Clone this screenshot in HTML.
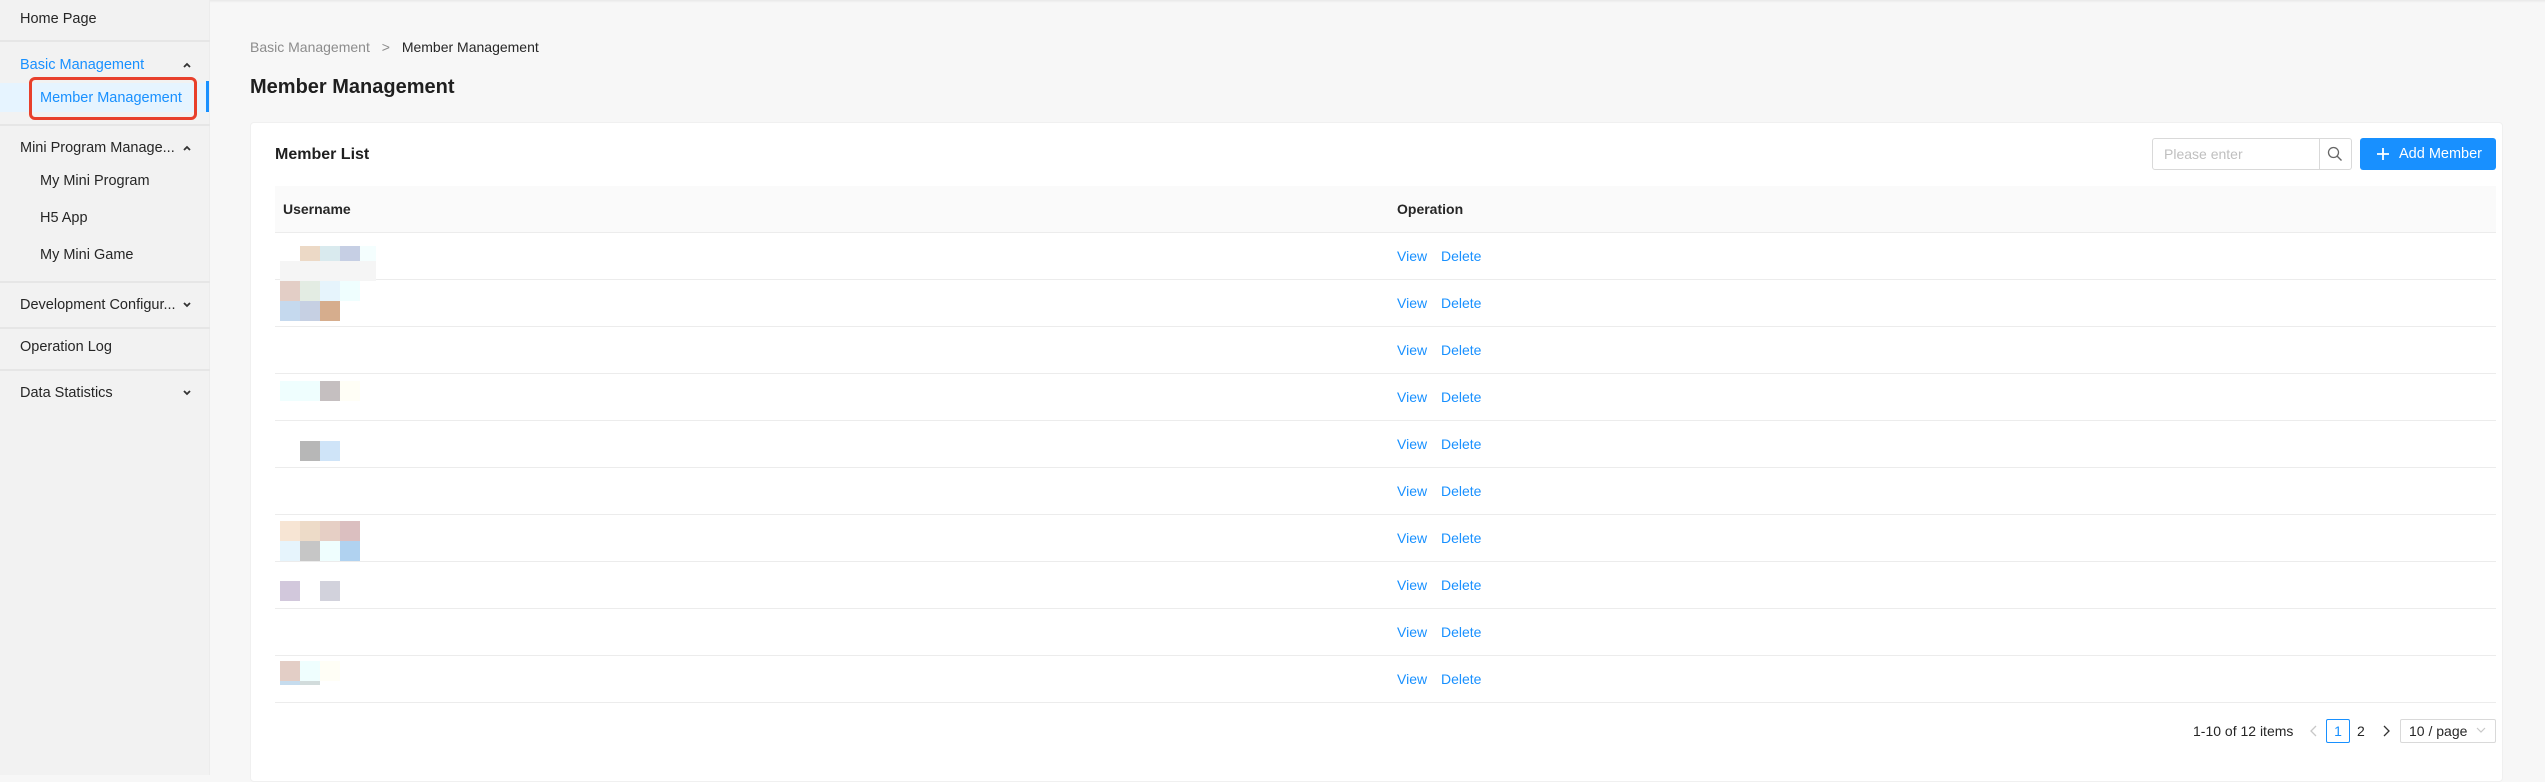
<!DOCTYPE html><html><head><meta charset="utf-8"><style>
*{box-sizing:border-box;margin:0;padding:0}
body{width:2545px;height:775px;background:#f7f7f7;font-family:"Liberation Sans",sans-serif;color:#262626;position:relative;overflow:hidden;font-size:14.5px}
.a{position:absolute}
.sb{left:0;top:0;width:210px;height:775px;background:#f2f2f2;border-right:1px solid #ececec}
.t{position:absolute;white-space:nowrap;line-height:1;transform:translateY(-50%)}
.sep{position:absolute;left:0;width:210px;height:2px;background:#e6e6e6}
.chev{position:absolute;left:182px;width:10px;height:10px}
.sq{position:absolute;width:20px;height:20px}
.rl{position:absolute;left:275px;width:2221px;height:1px;background:#ececec}
.lk{color:#1890ff}
</style></head><body>
<div class="a" style="left:0;top:0;width:2545px;height:3px;background:linear-gradient(#e8e8e8,#f7f7f7)"></div>
<div class="a sb"></div>
<div class="t" style="left:20px;top:19px">Home Page</div>
<div class="sep" style="top:40px"></div>
<div class="t" style="left:20px;top:65px;color:#1890ff">Basic Management</div>
<svg class="chev" style="top:60px" viewBox="0 0 10 10"><path d="M2 7 L5 4 L8 7" stroke="#333" stroke-width="1.8" fill="none"/></svg>
<div class="a" style="left:0;top:83px;width:206px;height:29px;background:#e6f4ff"></div>
<div class="a" style="left:206px;top:81px;width:3px;height:31px;background:#1890ff"></div>
<div class="t" style="left:40px;top:98px;color:#1890ff">Member Management</div>
<div class="a" style="left:29px;top:77px;width:168px;height:43px;border:3px solid #e8402c;border-radius:6px"></div>
<div class="sep" style="top:124px"></div>
<div class="t" style="left:20px;top:148px">Mini Program Manage...</div>
<svg class="chev" style="top:143px" viewBox="0 0 10 10"><path d="M2 7 L5 4 L8 7" stroke="#333" stroke-width="1.8" fill="none"/></svg>
<div class="t" style="left:40px;top:181px">My Mini Program</div>
<div class="t" style="left:40px;top:218px">H5 App</div>
<div class="t" style="left:40px;top:255px">My Mini Game</div>
<div class="sep" style="top:281px"></div>
<div class="t" style="left:20px;top:305px">Development Configur...</div>
<svg class="chev" style="top:300px" viewBox="0 0 10 10"><path d="M2 3 L5 6 L8 3" stroke="#333" stroke-width="1.8" fill="none"/></svg>
<div class="sep" style="top:327px"></div>
<div class="t" style="left:20px;top:347px">Operation Log</div>
<div class="sep" style="top:369px"></div>
<div class="t" style="left:20px;top:393px">Data Statistics</div>
<svg class="chev" style="top:388px" viewBox="0 0 10 10"><path d="M2 3 L5 6 L8 3" stroke="#333" stroke-width="1.8" fill="none"/></svg>

<div class="t" style="left:250px;top:47px;font-size:14px;color:#8c8c8c">Basic Management <span style="margin:0 8px">&gt;</span> <span style="color:#262626">Member Management</span></div>
<div class="t" style="left:250px;top:87px;font-size:20px;font-weight:600;color:#1f1f1f">Member Management</div>

<div class="a" style="left:250px;top:122px;width:2253px;height:660px;background:#fff;border-radius:4px;border:1px solid #f0f0f0"></div>
<div class="t" style="left:275px;top:155px;font-size:16px;font-weight:600;color:#1f1f1f">Member List</div>
<div class="a" style="left:2152px;top:138px;width:200px;height:32px;border:1px solid #d9d9d9;border-radius:3px"></div>
<div class="a" style="left:2319px;top:138px;width:1px;height:32px;background:#d9d9d9"></div>
<div class="t" style="left:2164px;top:154px;font-size:14px;color:#bfbfbf">Please enter</div>
<svg class="a" style="left:2327px;top:146px" width="16" height="16" viewBox="0 0 16 16"><circle cx="6.5" cy="6.5" r="5" stroke="#666" stroke-width="1.3" fill="none"/><path d="M10 10 L14.5 14.5" stroke="#666" stroke-width="1.4"/></svg>
<div class="a" style="left:2360px;top:138px;width:136px;height:32px;background:#1890ff;border-radius:3px"></div>
<svg class="a" style="left:2376px;top:147px" width="14" height="14" viewBox="0 0 14 14"><path d="M7 1V13M1 7H13" stroke="#fff" stroke-width="1.8"/></svg>
<div class="t" style="left:2399px;top:154px;font-size:14.5px;color:#fff">Add Member</div>

<div class="a" style="left:275px;top:186px;width:2221px;height:46px;background:#fafafa"></div>
<div class="t" style="left:283px;top:209px;font-size:14px;font-weight:600">Username</div>
<div class="t" style="left:1397px;top:209px;font-size:14px;font-weight:600">Operation</div>
<div class="rl" style="top:232px"></div>
<div class="rl" style="top:279px"></div><div class="rl" style="top:326px"></div><div class="rl" style="top:373px"></div><div class="rl" style="top:420px"></div><div class="rl" style="top:467px"></div><div class="rl" style="top:514px"></div><div class="rl" style="top:561px"></div><div class="rl" style="top:608px"></div><div class="rl" style="top:655px"></div><div class="rl" style="top:702px"></div>

<div class="t lk" style="left:1397px;top:256px;font-size:14px">View <span style="margin-left:10px">Delete</span></div>
<div class="t lk" style="left:1397px;top:303px;font-size:14px">View <span style="margin-left:10px">Delete</span></div>
<div class="t lk" style="left:1397px;top:350px;font-size:14px">View <span style="margin-left:10px">Delete</span></div>
<div class="t lk" style="left:1397px;top:397px;font-size:14px">View <span style="margin-left:10px">Delete</span></div>
<div class="t lk" style="left:1397px;top:444px;font-size:14px">View <span style="margin-left:10px">Delete</span></div>
<div class="t lk" style="left:1397px;top:491px;font-size:14px">View <span style="margin-left:10px">Delete</span></div>
<div class="t lk" style="left:1397px;top:538px;font-size:14px">View <span style="margin-left:10px">Delete</span></div>
<div class="t lk" style="left:1397px;top:585px;font-size:14px">View <span style="margin-left:10px">Delete</span></div>
<div class="t lk" style="left:1397px;top:632px;font-size:14px">View <span style="margin-left:10px">Delete</span></div>
<div class="t lk" style="left:1397px;top:679px;font-size:14px">View <span style="margin-left:10px">Delete</span></div>

<div class="sq" style="left:300px;top:246px;height:15px;background:#ecd9c6"></div>
<div class="sq" style="left:320px;top:246px;height:15px;background:#d9eaee"></div>
<div class="sq" style="left:340px;top:246px;height:15px;background:#c6cfe4"></div>
<div class="sq" style="left:360px;top:246px;height:15px;width:16px;background:#f4fefe"></div>
<div class="sq" style="left:280px;top:261px;width:96px;background:#f5f5f5"></div>
<div class="sq" style="left:280px;top:281px;background:#e3cec6"></div>
<div class="sq" style="left:300px;top:281px;background:#e3ece3"></div>
<div class="sq" style="left:320px;top:281px;background:#e6f4fc"></div>
<div class="sq" style="left:340px;top:281px;background:#effefe"></div>
<div class="sq" style="left:280px;top:301px;background:#c5d9ee"></div>
<div class="sq" style="left:300px;top:301px;background:#c6d0e3"></div>
<div class="sq" style="left:320px;top:301px;background:#d6ad8d"></div>
<div class="sq" style="left:280px;top:381px;width:40px;background:#effefe"></div>
<div class="sq" style="left:320px;top:381px;background:#c5bfc0"></div>
<div class="sq" style="left:340px;top:381px;background:#fffef6"></div>
<div class="sq" style="left:300px;top:441px;background:#b7b7b7"></div>
<div class="sq" style="left:320px;top:441px;background:#cfe4f8"></div>
<div class="sq" style="left:280px;top:521px;background:#f7e5d4"></div>
<div class="sq" style="left:300px;top:521px;background:#eddbc8"></div>
<div class="sq" style="left:320px;top:521px;background:#e6cfc5"></div>
<div class="sq" style="left:340px;top:521px;background:#dbbfc0"></div>
<div class="sq" style="left:280px;top:541px;background:#e6f4fc"></div>
<div class="sq" style="left:300px;top:541px;background:#c6c6c6"></div>
<div class="sq" style="left:320px;top:541px;background:#effefe"></div>
<div class="sq" style="left:340px;top:541px;background:#b0d2f0"></div>
<div class="sq" style="left:280px;top:581px;background:#d2c8dc"></div>
<div class="sq" style="left:320px;top:581px;background:#d2d2dc"></div>
<div class="sq" style="left:280px;top:661px;background:#e3cec6"></div>
<div class="sq" style="left:300px;top:661px;background:#effefe"></div>
<div class="sq" style="left:320px;top:661px;background:#fffef6"></div>
<div class="sq" style="left:280px;top:681px;height:4px;background:#c6dcee"></div>
<div class="sq" style="left:300px;top:681px;height:4px;background:#d2dcdc"></div>

<div class="t" style="left:2193px;top:731px;font-size:14px">1-10 of 12 items</div>
<svg class="a" style="left:2309px;top:725px" width="10" height="12" viewBox="0 0 10 12"><path d="M7 1 L2 6 L7 11" stroke="#c8c8c8" stroke-width="1.3" fill="none"/></svg>
<div class="a" style="left:2326px;top:719px;width:24px;height:24px;border:1px solid #1890ff;border-radius:2px;color:#1890ff;font-size:14px;text-align:center;line-height:22px">1</div>
<div class="t" style="left:2357px;top:731px;font-size:14px">2</div>
<svg class="a" style="left:2381px;top:725px" width="10" height="12" viewBox="0 0 10 12"><path d="M3 1 L8 6 L3 11" stroke="#333" stroke-width="1.3" fill="none"/></svg>
<div class="a" style="left:2400px;top:719px;width:96px;height:24px;border:1px solid #d9d9d9;border-radius:2px"></div>
<div class="t" style="left:2409px;top:731px;font-size:14px">10 / page</div>
<svg class="a" style="left:2476px;top:727px" width="10" height="7" viewBox="0 0 10 7"><path d="M1 1 L5 5 L9 1" stroke="#c8c8c8" stroke-width="1.2" fill="none"/></svg>
</body></html>
